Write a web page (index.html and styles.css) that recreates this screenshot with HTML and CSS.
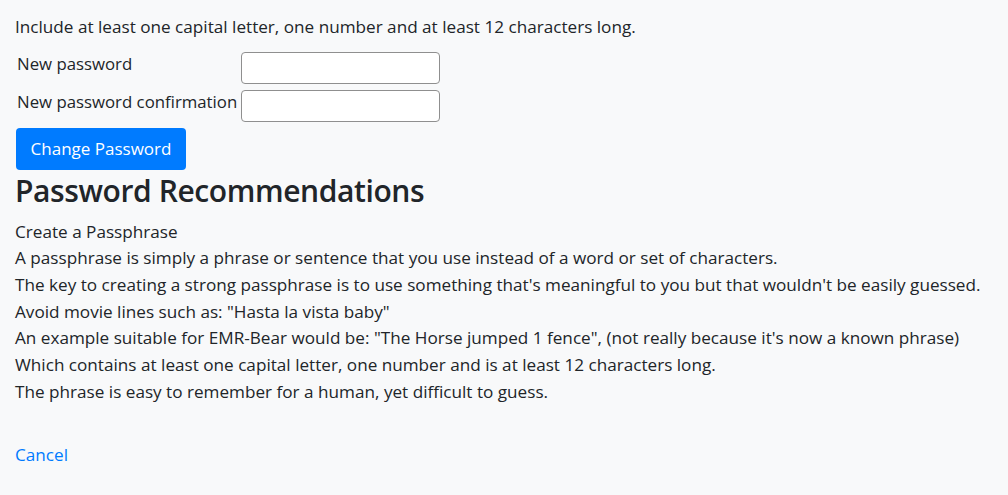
FILE: index.html
```html
<!DOCTYPE html>
<html lang="en">
<head>
<meta charset="utf-8">
<title>Change Password</title>
<link rel="stylesheet" href="styles.css">
</head>
<body>
<main class="page">
  <p class="hint">Include at least one capital letter, one number and at least 12 characters long.</p>
  <form class="pw-form">
    <div class="fields">
      <label class="field-label" for="pw1">New password</label>
      <input id="pw1" class="field-input" type="password">
      <label class="field-label" for="pw2">New password confirmation</label>
      <input id="pw2" class="field-input" type="password">
    </div>
    <button type="button" class="btn-primary">Change Password</button>
  </form>
  <h2 class="rec-title">Password Recommendations</h2>
  <div class="rec-body">
    <div>Create a Passphrase</div>
    <div>A passphrase is simply a phrase or sentence that you use instead of a word or set of characters.</div>
    <div>The key to creating a strong passphrase is to use something that's meaningful to you but that wouldn't be easily guessed.</div>
    <div>Avoid movie lines such as: "Hasta la vista baby"</div>
    <div>An example suitable for EMR-Bear would be: "The Horse jumped 1 fence", (not really because it's now a known phrase)</div>
    <div>Which contains at least one capital letter, one number and is at least 12 characters long.</div>
    <div>The phrase is easy to remember for a human, yet difficult to guess.</div>
  </div>
  <a class="cancel" href="#">Cancel</a>
</main>
</body>
</html>
```
FILE: styles.css
```css
html, body {
  margin: 0;
  background: #f8f9fa;
}
body {
  font-family: "Open Sans", "Noto Sans", sans-serif;
  font-size: 17.15px;
  line-height: 26.67px;
  color: #212529;
}
.page {
  padding: 14px 15px;
}
.hint {
  margin: 0 0 11px;
}
.pw-form {
  margin: 0;
}
.fields {
  display: grid;
  grid-template-columns: max-content 199px;
  column-gap: 4px;
  row-gap: 6px;
  padding-left: 2px;
  width: max-content;
}
.field-label {
  align-self: start;
  margin-top: -1px;
  font-size: 16.8px;
}
.field-input {
  box-sizing: border-box;
  width: 199px;
  height: 32px;
  border: 1px solid #8f8f8f;
  border-radius: 4px;
  background: #fff;
  margin: 0;
}
.btn-primary {
  display: block;
  margin: 6px 0 0 1px;
  width: 170px;
  height: 42px;
  padding: 0;
  border: none;
  border-radius: 4px;
  background: #007bff;
  color: #fff;
  font-family: inherit;
  font-size: 17px;
}
.rec-title {
  margin: 0 0 7px;
  font-size: 30px;
  line-height: 42px;
  font-weight: 600;
  letter-spacing: -0.4px;
}
.cancel {
  display: block;
  width: max-content;
  margin-top: 37px;
  color: #007bff;
  text-decoration: none;
}
```
